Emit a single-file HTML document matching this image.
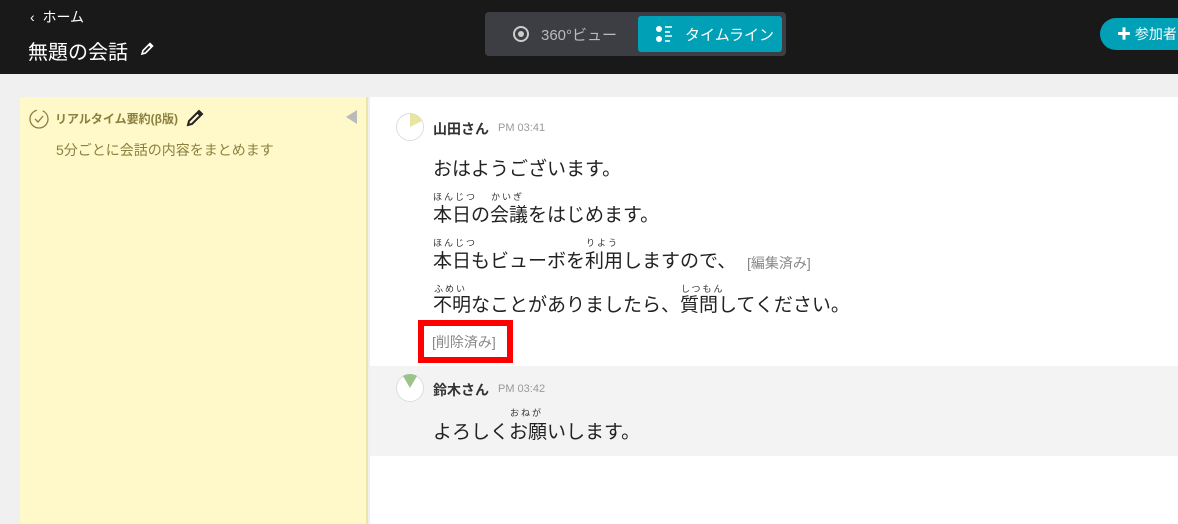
<!DOCTYPE html>
<html><head><meta charset="utf-8"><style>
*{margin:0;padding:0;box-sizing:border-box}
body{width:1178px;height:524px;overflow:hidden;background:#f0f0f0;font-family:"Liberation Sans","Noto Sans CJK JP",sans-serif;position:relative}
.a{position:absolute;white-space:nowrap}
.hd{position:absolute;left:0;top:0;width:1178px;height:74px;background:#191919}
.t{font-size:19px;color:#222;line-height:24px}
.r{font-size:9px;color:#333;line-height:10px;letter-spacing:2px}
.g{color:#888;font-size:14px}
</style></head><body>
<div class="hd"></div>
<div class="a" style="left:30px;top:7px;color:#fff;font-size:14px">‹&nbsp;&nbsp;ホーム</div>
<div class="a" style="left:28px;top:36px;color:#fff;font-size:20px">無題の会話</div>
<svg class="a" style="left:139px;top:41px" width="16" height="16" viewBox="0 0 16 16"><path d="M3 13 L4 9.5 L11 2.5 L13.5 5 L6.5 12 Z M10 3.5 L12.5 6" fill="none" stroke="#fff" stroke-width="1.6"/></svg>
<div class="a" style="left:485px;top:12px;width:301px;height:44px;background:#3d3d44;border-radius:4px"></div>
<svg class="a" style="left:512px;top:25px" width="18" height="18" viewBox="0 0 18 18"><circle cx="9" cy="9" r="7" fill="none" stroke="#ccc" stroke-width="2"/><circle cx="9" cy="9" r="3" fill="#ccc"/></svg>
<div class="a" style="left:541px;top:24px;color:#bbb;font-size:15px">360°ビュー</div>
<div class="a" style="left:638px;top:16px;width:144px;height:36px;background:#00a0b6;border-radius:3px"></div>
<svg class="a" style="left:655px;top:25px" width="20" height="18" viewBox="0 0 20 18"><circle cx="4" cy="4" r="3" fill="#fff"/><circle cx="4" cy="14" r="3" fill="#fff"/><path d="M10 2h7M10 7h5M10 11h7M10 16h5" stroke="#fff" stroke-width="1.5"/></svg>
<div class="a" style="left:685px;top:24px;color:#fff;font-size:15px">タイムライン</div>
<div class="a" style="left:1100px;top:18px;width:100px;height:32px;background:#00a0b6;border-radius:16px"></div>
<div class="a" style="left:1117px;top:24px;color:#fff;font-size:14px">✚ 参加者</div>
<div class="a" style="left:20px;top:97px;width:348px;height:427px;background:#fff8c8;border-right:2px solid #ece4a8"></div>
<svg class="a" style="left:28px;top:107px" width="22" height="22" viewBox="0 0 22 22"><circle cx="11" cy="12" r="9" fill="none" stroke="#8a8040" stroke-width="1.3" stroke-dasharray="40 6"/><path d="M7 12l3 3 5-6" fill="none" stroke="#8a8040" stroke-width="1.3"/></svg>
<div class="a" style="left:55px;top:110px;color:#8a8040;font-size:12px;font-weight:bold">リアルタイム要約(β版)</div>
<svg class="a" style="left:185px;top:108px" width="20" height="20" viewBox="0 0 20 20"><path d="M3 17 L4 13 L14 3 L17 6 L7 16 Z M12.5 4.5 L15.5 7.5" fill="none" stroke="#222" stroke-width="2"/></svg>
<div class="a" style="left:346px;top:110px;width:0;height:0;border-top:7px solid transparent;border-bottom:7px solid transparent;border-right:11px solid #bbb"></div>
<div class="a" style="left:56px;top:140px;color:#8a8040;font-size:14px">5分ごとに会話の内容をまとめます</div>
<div class="a" style="left:370px;top:97px;width:808px;height:269px;background:#fff"></div>
<div class="a" style="left:370px;top:366px;width:808px;height:90px;background:#f3f3f3"></div>
<div class="a" style="left:370px;top:456px;width:808px;height:68px;background:#fff"></div>
<svg class="a" style="left:395px;top:112px" width="30" height="30" viewBox="0 0 30 30"><circle cx="15" cy="15" r="13.5" fill="#fff" stroke="#ddd" stroke-width="1"/><path d="M15 15 L15 1.5 A13.5 13.5 0 0 1 27 9 Z" fill="#e6e6a0"/></svg>
<div class="a" style="left:433px;top:119px;font-size:14px;font-weight:bold;color:#333">山田さん</div>
<div class="a" style="left:498px;top:122px;font-size:11px;color:#999">PM 03:41</div>
<div class="a t" style="left:433px;top:158px">おはようございます。</div>
<div class="a r" style="left:433px;top:192px">ほんじつ</div><div class="a r" style="left:491px;top:192px">かいぎ</div>
<div class="a t" style="left:433px;top:204px">本日の会議をはじめます。</div>
<div class="a r" style="left:433px;top:238px">ほんじつ</div><div class="a r" style="left:586px;top:238px">りよう</div>
<div class="a t" style="left:433px;top:250px">本日もビューボを利用しますので、</div>
<div class="a g" style="left:747px;top:253px">[編集済み]</div>
<div class="a r" style="left:434px;top:284px">ふめい</div><div class="a r" style="left:681px;top:284px">しつもん</div>
<div class="a t" style="left:433px;top:294px">不明なことがありましたら、質問してください。</div>
<div class="a" style="left:418px;top:320px;width:95px;height:43px;border:6px solid #f00;background:#fff"></div>
<div class="a g" style="left:432px;top:332px">[削除済み]</div>
<svg class="a" style="left:395px;top:373px" width="30" height="30" viewBox="0 0 30 30"><circle cx="15" cy="15" r="13.5" fill="#fff" stroke="#ddd" stroke-width="1"/><path d="M15 15 L8 3 A13.5 13.5 0 0 1 22 3 Z" fill="#9cc48a"/></svg>
<div class="a" style="left:433px;top:380px;font-size:14px;font-weight:bold;color:#333">鈴木さん</div>
<div class="a" style="left:498px;top:383px;font-size:11px;color:#999">PM 03:42</div>
<div class="a r" style="left:510px;top:408px">おねが</div>
<div class="a t" style="left:433px;top:421px">よろしくお願いします。</div>
</body></html>
